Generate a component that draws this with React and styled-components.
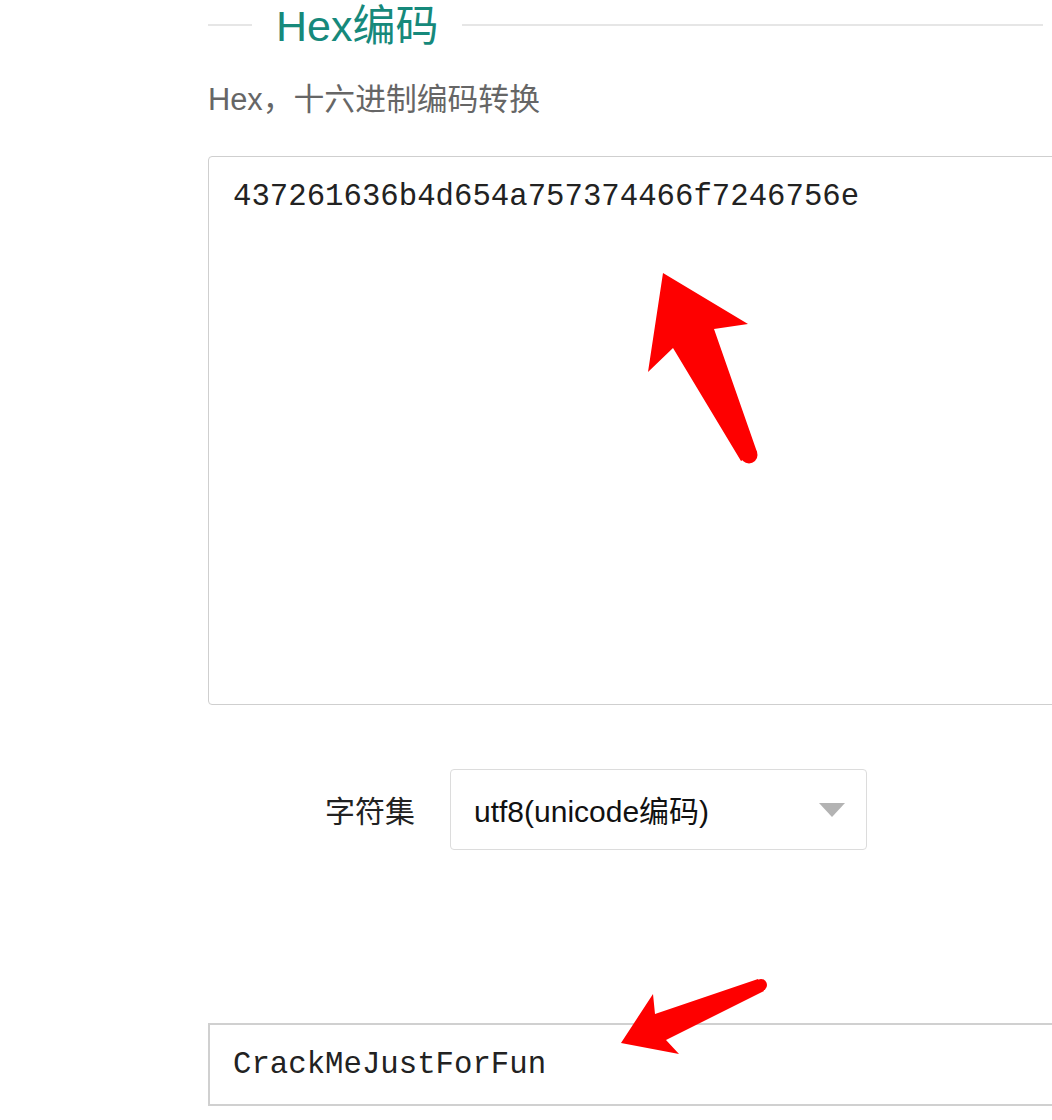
import React from "react"
import styled, { createGlobalStyle } from "styled-components"

const GlobalStyle = createGlobalStyle`
  body {
    margin: 0;
    background: #fff;
    overflow: hidden;
    font-family: "Liberation Sans", "Noto Sans CJK SC", sans-serif;
  }
`

const Page = styled.div`
  position: relative;
  width: 1052px;
  height: 1120px;
  overflow: hidden;
  padding-left: 208px;
  box-sizing: border-box;
`

const Legend = styled.div`
  display: flex;
  align-items: center;
  width: 835px;
  height: 50px;
`

const Rule = styled.div`
  height: 2px;
  background: #e6e6e6;
  width: ${props => props.w ? props.w + "px" : "auto"};
  flex: ${props => props.w ? "none" : "1"};
`

const Title = styled.h2`
  margin: 3px 24px 0 24px;
  font-size: 43px;
  font-weight: normal;
  color: #16897b;
  line-height: 1;
`

const Subtitle = styled.p`
  margin: 35px 0 0;
  font-size: 30.8px;
  line-height: 1;
  color: #666;
`

const HexBox = styled.div`
  margin-top: 40px;
  width: 900px;
  height: 549px;
  box-sizing: border-box;
  border: 1px solid #cfcfcf;
  border-radius: 4px;
  padding: 22px 24px;
  font-family: "Liberation Mono", "Courier New", monospace;
  font-size: 30.7px;
  line-height: 1.2;
  color: #222;
`

const CharsetRow = styled.div`
  display: flex;
  align-items: center;
  margin-top: 64px;
  padding-left: 117px;
  gap: 35px;
`

const Label = styled.span`
  font-size: 30px;
  color: #222;
`

const Select = styled.div`
  position: relative;
  width: 417px;
  height: 81px;
  box-sizing: border-box;
  border: 1px solid #dcdcdc;
  border-radius: 4px;
  display: flex;
  align-items: center;
  padding-left: 23px;
  font-size: 30px;
  color: #111;
`

const Caret = styled.span`
  position: absolute;
  right: 21px;
  top: 33px;
  width: 0;
  height: 0;
  border-left: 13px solid transparent;
  border-right: 13px solid transparent;
  border-top: 14px solid #b3b3b3;
`

const OutputBox = styled.div`
  margin-top: 173px;
  width: 900px;
  height: 83px;
  box-sizing: border-box;
  border: 2px solid #d0d0d0;
  display: flex;
  align-items: center;
  padding-left: 23px;
  font-family: "Liberation Mono", "Courier New", monospace;
  font-size: 30.7px;
  color: #222;
`

const Overlay = styled.svg`
  position: absolute;
  left: 0;
  top: 0;
  pointer-events: none;
`

const Arrows = () => (
  <Overlay width="1052" height="1120" viewBox="0 0 1052 1120">
    <g fill="#fe0000">
      <polygon points="663,273 748,324 714,329 757,452 741,461 673,348 648,372" />
      <circle cx="749" cy="455" r="8.5" />
      <polygon points="621,1043 653,994 655,1014 758,979 764,991 666,1040 679,1054" />
      <circle cx="761" cy="985" r="6" />
    </g>
  </Overlay>
)

export default function App() {
  return (
    <>
      <GlobalStyle />
      <Page>
        <Legend>
          <Rule w={44} />
          <Title>Hex编码</Title>
          <Rule />
        </Legend>
        <Subtitle>Hex，十六进制编码转换</Subtitle>
        <HexBox>437261636b4d654a757374466f7246756e</HexBox>
        <CharsetRow>
          <Label>字符集</Label>
          <Select>
            utf8(unicode编码)
            <Caret />
          </Select>
        </CharsetRow>
        <OutputBox>CrackMeJustForFun</OutputBox>
        <Arrows />
      </Page>
    </>
  )
}
